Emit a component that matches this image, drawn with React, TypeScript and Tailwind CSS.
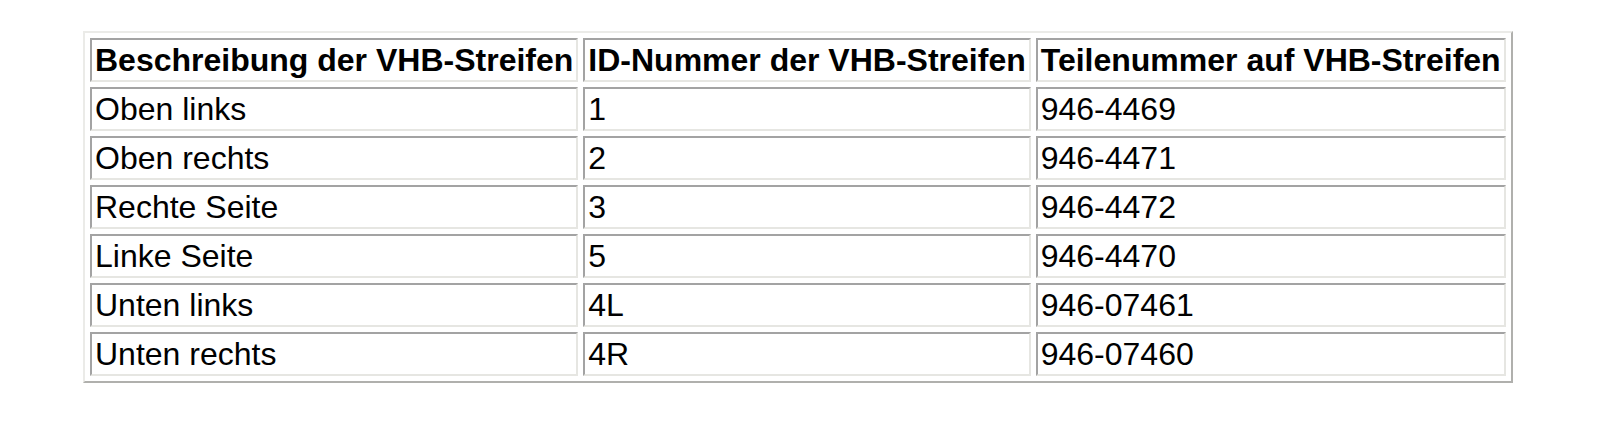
const rows: [string, string, string][] = [
  ["Oben links", "1", "946-4469"],
  ["Oben rechts", "2", "946-4471"],
  ["Rechte Seite", "3", "946-4472"],
  ["Linke Seite", "5", "946-4470"],
  ["Unten links", "4L", "946-07461"],
  ["Unten rechts", "4R", "946-07460"],
];

const cell =
  "h-[44px] px-[3px] py-0 align-middle text-left whitespace-nowrap border-2 border-t-[#a3a3a3] border-l-[#a3a3a3] border-b-[#e6e6e2] border-r-[#e6e6e2]";

export default function App() {
  return (
    <div className="min-h-[437px] w-full bg-white pt-[31px] pl-[83px] font-['Liberation_Sans',Arial,sans-serif] text-[32px] leading-none text-black">
      <table className="border-separate border-spacing-[5px] border-2 border-t-[#ebebe8] border-l-[#ebebe8] border-b-[#b0b0ad] border-r-[#b0b0ad]">
        <thead>
          <tr>
            <th className={`${cell} font-bold`}>Beschreibung der VHB-Streifen</th>
            <th className={`${cell} font-bold`}>ID-Nummer der VHB-Streifen</th>
            <th className={`${cell} font-bold`}>Teilenummer auf VHB-Streifen</th>
          </tr>
        </thead>
        <tbody>
          {rows.map((r) => (
            <tr key={r[0]}>
              <td className={cell}>{r[0]}</td>
              <td className={cell}>{r[1]}</td>
              <td className={cell}>{r[2]}</td>
            </tr>
          ))}
        </tbody>
      </table>
    </div>
  );
}
